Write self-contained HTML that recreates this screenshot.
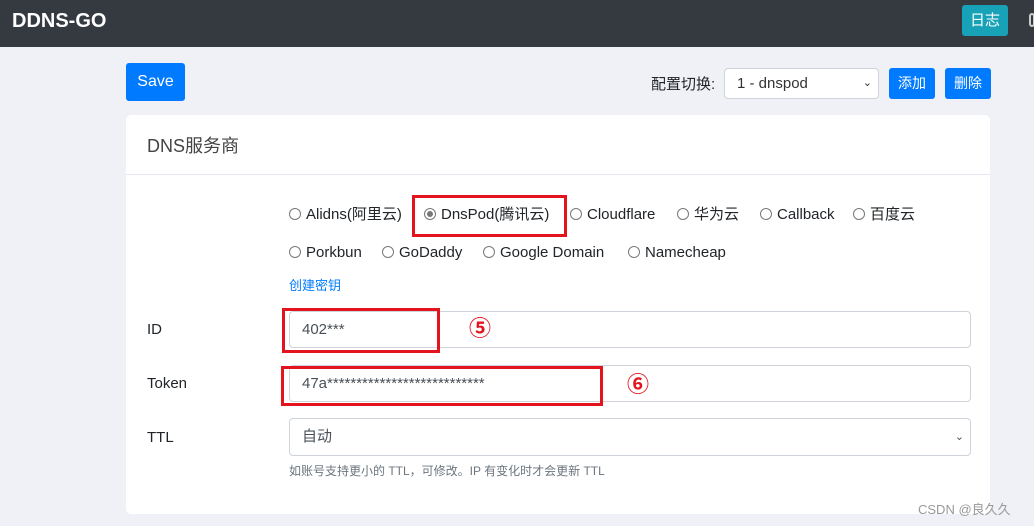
<!DOCTYPE html>
<html><head><meta charset="utf-8"><style>
*{box-sizing:border-box;margin:0;padding:0}
body{width:1034px;height:526px;overflow:hidden;background:#f0f1f6;font-family:"Liberation Sans","Noto Sans CJK SC",sans-serif;color:#212529;position:relative}
.a{position:absolute;line-height:20px}
.nav{left:0;top:0;width:1034px;height:47px;background:#343a40}
.btn{position:absolute;color:#fff;border-radius:3px;text-align:center;font-size:14px}
.card{left:126px;top:115px;width:864px;height:399px;background:#fff;border-radius:5px}
.inp{position:absolute;border:1px solid #ced4da;border-radius:4px;background:#fff;font-size:15px;color:#495057;padding-left:12px}
.rad{position:absolute;font-size:15px;color:#212529;white-space:nowrap;height:20px;line-height:20px}
.rad i{display:inline-block;width:12px;height:12px;border:1px solid #777;border-radius:50%;margin-right:5px;position:relative;vertical-align:-1px}
.rad i.on::after{content:"";position:absolute;left:2px;top:2px;width:6px;height:6px;border-radius:50%;background:#777}
.red{position:absolute;border:3px solid #e3141e}
.num{position:absolute;color:#e3141e;font-size:22px;font-weight:bold;line-height:24px}
.lbl{position:absolute;font-size:15px;line-height:20px}
</style></head><body>
<div class="a nav"></div>
<div class="a" style="left:12px;top:10px;color:#fff;font-weight:bold;font-size:20px;line-height:22px">DDNS-GO</div>
<div class="btn" style="left:962px;top:5px;width:46px;height:31px;line-height:31px;background:#17a2b8;font-size:15px">日志</div>
<div class="a" style="left:1029px;top:13px;width:6px;height:14px;border:2px solid #ccc;border-radius:4px"></div>
<div class="btn" style="left:126px;top:63px;width:59px;height:38px;line-height:38px;background:#007bff;font-size:16px">Save</div>
<div class="a" style="left:651px;top:75px;font-size:15px">配置切换:</div>
<div class="inp" style="left:724px;top:68px;width:155px;height:31px;line-height:29px;padding-left:12px;color:#333">1 - dnspod<span style="position:absolute;right:6px;font-size:11px">&#8964;</span></div>
<div class="btn" style="left:889px;top:68px;width:46px;height:31px;line-height:31px;background:#007bff">添加</div>
<div class="btn" style="left:945px;top:68px;width:46px;height:31px;line-height:31px;background:#007bff">删除</div>
<div class="a card"></div>
<div class="a" style="left:147px;top:135px;font-size:18px;color:#444;line-height:22px">DNS服务商</div>
<div class="a" style="left:126px;top:174px;width:864px;height:1px;background:#e6e7ee"></div>
<div class="rad" style="left:289px;top:205px"><i></i>Alidns(阿里云)</div>
<div class="rad" style="left:424px;top:205px"><i class="on"></i>DnsPod(腾讯云)</div>
<div class="rad" style="left:570px;top:205px"><i></i>Cloudflare</div>
<div class="rad" style="left:677px;top:205px"><i></i>华为云</div>
<div class="rad" style="left:760px;top:205px"><i></i>Callback</div>
<div class="rad" style="left:853px;top:205px"><i></i>百度云</div>
<div class="rad" style="left:289px;top:243px"><i></i>Porkbun</div>
<div class="rad" style="left:382px;top:243px"><i></i>GoDaddy</div>
<div class="rad" style="left:483px;top:243px"><i></i>Google Domain</div>
<div class="rad" style="left:628px;top:243px"><i></i>Namecheap</div>
<div class="a" style="left:289px;top:276px;font-size:13px;color:#007bff">创建密钥</div>
<div class="lbl" style="left:147px;top:320px">ID</div>
<div class="inp" style="left:289px;top:311px;width:682px;height:37px;line-height:35px">402***</div>
<div class="lbl" style="left:147px;top:374px">Token</div>
<div class="inp" style="left:289px;top:365px;width:682px;height:37px;line-height:35px">47a***************************</div>
<div class="lbl" style="left:147px;top:428px">TTL</div>
<div class="inp" style="left:289px;top:418px;width:682px;height:38px;line-height:36px">自动<span style="position:absolute;right:6px;font-size:11px">&#8964;</span></div>
<div class="a" style="left:289px;top:461px;font-size:12px;color:#6c757d">如账号支持更小的 TTL，可修改。IP 有变化时才会更新 TTL</div>
<div class="red" style="left:412px;top:195px;width:155px;height:42px"></div>
<div class="red" style="left:282px;top:308px;width:158px;height:45px"></div>
<div class="red" style="left:281px;top:366px;width:322px;height:40px"></div>
<div class="num" style="left:469px;top:317px">⑤</div>
<div class="num" style="left:627px;top:373px">⑥</div>
<div class="a" style="left:918px;top:500px;font-size:13px;color:#999">CSDN @良久久</div>
</body></html>
